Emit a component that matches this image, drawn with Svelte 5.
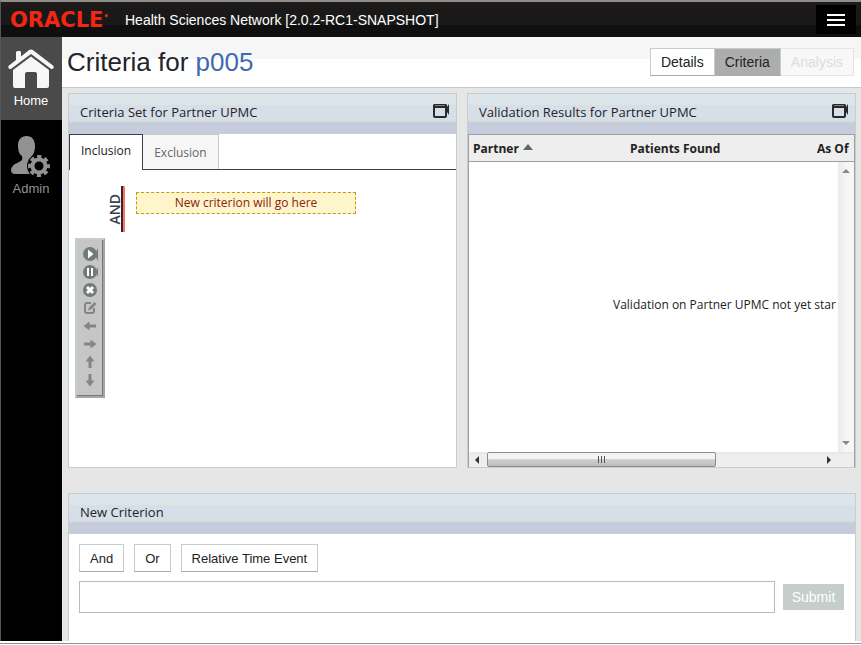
<script lang="ts">
    type Tool = { name: string; icon: string };

    let view = $state('Criteria');
    let tab = $state('Inclusion');
    let criterion = $state('');

    const views = ['Details', 'Criteria', 'Analysis'];
    const tabs = ['Inclusion', 'Exclusion'];
    const operators = ['And', 'Or', 'Relative Time Event'];
    const tools: Tool[] = [
        { name: 'Run', icon: 'play' },
        { name: 'Pause', icon: 'pause' },
        { name: 'Remove', icon: 'remove' },
        { name: 'Edit', icon: 'edit' },
        { name: 'Move left', icon: 'left' },
        { name: 'Move right', icon: 'right' },
        { name: 'Move up', icon: 'up' },
        { name: 'Move down', icon: 'down' },
    ];
    const turns: { [icon: string]: number } = { left: 180, right: 0, up: -90, down: 90 };
</script>

{#snippet windowIcon()}
    <button class="window-button" aria-label="Maximize panel">
        <svg width="17" height="14" viewBox="0 0 17 14">
            <path d="M1 3V12a1 1 0 0 0 1 1H12a1 1 0 0 0 1-1V3" fill="none" stroke="#262a2e" stroke-width="2" />
            <path d="M1 0H13L14 1V4H0V1Z" fill="#262a2e" />
            <path d="M2 1.500H12" stroke="#7a8188" />
            <path d="M14 3L16 0V11L14 8Z" fill="#262a2e" />
        </svg>
    </button>
{/snippet}

<div class="page">
    <header class="topbar">
        <span class="logo">ORACLE<sup>•</sup></span>
        <span class="product">Health Sciences Network [2.0.2-RC1-SNAPSHOT]</span>
        <button class="menu" aria-label="Menu">
            <svg width="18" height="12" viewBox="0 0 18 12">
                <path d="M0 1H18M0 6H18M0 11H18" stroke="#fff" stroke-width="2" />
            </svg>
        </button>
    </header>

    <div class="body">
        <nav class="sidebar">
            <a class="nav-item active" href="#home">
                <svg width="46" height="39" viewBox="0 0 46 39">
                    <path d="M8 11V3.500Q8 2 9.500 2H12Q13 2 13 3.500V7.500L20.500 1.500Q23 -.5 25.500 1.500L45 16.500Q46.500 18 45 19.500Q44 20.500 42.500 19.500L23 5L3.500 19.500Q2 20.500 1 19.500Q-.5 18 1 16.500Z" fill="#f7f7f7" />
                    <path d="M5 21L23 7.500L41 21V37Q41 39 39 39H29V25Q29 23 27 23H19Q17 23 17 25V39H7Q5 39 5 37Z" fill="#f7f7f7" />
                </svg>
                <span>Home</span>
            </a>
            <a class="nav-item" href="#admin">
                <svg width="40" height="41" viewBox="0 0 40 41">
                    <path d="M15.500 0C21 0 24 4 24 10C24 16 22 19 20 21C20 24 22 25 25 26C29 28 31 30 32 34L31 38H4Q0 38 0 34C1 29 4 28 8 26C11 25 12 23 11 20C8 18 7 14 7 9C7 4 10 0 15.500 0Z" fill="#929292" />
                    <circle cx="28" cy="30" r="12" fill="#000" />
                    <circle cx="28" cy="30" r="9" fill="none" stroke="#929292" stroke-width="4" stroke-dasharray="4 3.068" stroke-dashoffset="2" />
                    <circle cx="28" cy="30" r="6.500" fill="none" stroke="#929292" stroke-width="4" />
                </svg>
                <span>Admin</span>
            </a>
        </nav>

        <main>
            <div class="title-row">
                <h1>Criteria for <a href="#p005">p005</a></h1>
                <div class="views">
                    {#each views as name}
                        <button
                            class:current={view === name}
                            disabled={name === 'Analysis'}
                            onclick={() => (view = name)}
                        >
                            {name}
                        </button>
                    {/each}
                </div>
            </div>

            <div class="panels">
                <section class="panel">
                    <div class="panel-head">
                        <h2>Criteria Set for Partner UPMC</h2>
                        {@render windowIcon()}
                    </div>
                    <div class="tabs" role="tablist">
                        {#each tabs as name}
                            <button
                                role="tab"
                                aria-selected={tab === name}
                                class:selected={tab === name}
                                onclick={() => (tab = name)}
                            >
                                {name}
                            </button>
                        {/each}
                    </div>
                    <div class="criteria">
                        <div class="group">
                            <span class="join">AND</span>
                            <div class="drop">New criterion will go here</div>
                        </div>
                        <div class="toolbox" role="toolbar" aria-label="Criterion tools">
                            {#each tools as tool}
                                <button aria-label={tool.name}>
                                    <svg width="16" height="14" viewBox="0 0 16 14">
                                        {#if tool.icon === 'play'}
                                            <path d="M14 5L16 1V14L14 10Z" fill="#727b7a" />
                                            <circle cx="8" cy="7" r="7" fill="#727b7a" />
                                            <path d="M6 2.500L11.500 7L6 11.500Z" fill="#fff" />
                                        {:else if tool.icon === 'pause'}
                                            <path d="M14 6L16 2V12L14 8Z" fill="#727b7a" />
                                            <circle cx="8" cy="7" r="7" fill="#727b7a" />
                                            <path d="M6 3V11M10 3V11" stroke="#fff" stroke-width="2" />
                                        {:else if tool.icon === 'remove'}
                                            <circle cx="8" cy="7" r="7" fill="#727b7a" />
                                            <path d="M5 4L11 10M11 4L5 10" stroke="#fff" stroke-width="3" />
                                        {:else if tool.icon === 'edit'}
                                            <path d="M9 2H5Q3 2 3 4V10Q3 12 5 12H10Q12 12 12 10V7" fill="none" stroke="#858585" stroke-width="2" />
                                            <path d="M6 9.500L7 6.500L12.500 1L14.500 3L9 8.500Z" fill="#858585" />
                                        {:else}
                                            <path
                                                d="M2 5.500H8.500V2.500L14.500 7L8.500 11.500V8.500H2Z"
                                                fill="#858585"
                                                transform={`rotate(${turns[tool.icon]} 8 7)`}
                                            />
                                        {/if}
                                    </svg>
                                </button>
                            {/each}
                        </div>
                    </div>
                </section>

                <section class="panel">
                    <div class="panel-head">
                        <h2>Validation Results for Partner UPMC</h2>
                        {@render windowIcon()}
                    </div>
                    <div class="results">
                        <table>
                            <thead>
                                <tr>
                                    <th class="col-partner">Partner <span class="sort"></span></th>
                                    <th class="col-found">Patients Found</th>
                                    <th>As Of</th>
                                </tr>
                            </thead>
                        </table>
                        <div class="viewport">
                            <p class="message">Validation on Partner UPMC not yet star</p>
                            <div class="vbar">
                                <i class="arrow up"></i>
                                <i class="arrow down"></i>
                            </div>
                        </div>
                        <div class="hbar">
                            <i class="arrow left"></i>
                            <div class="track"><div class="thumb"><i></i><i></i><i></i></div></div>
                            <i class="arrow right"></i>
                        </div>
                    </div>
                </section>
            </div>

            <section class="panel builder">
                <div class="panel-head">
                    <h2>New Criterion</h2>
                </div>
                <div class="operators">
                    {#each operators as name}
                        <button>{name}</button>
                    {/each}
                </div>
                <form class="entry" onsubmit={(e) => e.preventDefault()}>
                    <input type="text" aria-label="New criterion" bind:value={criterion} />
                    <button disabled={!criterion}>Submit</button>
                </form>
            </section>
        </main>
    </div>
    <div class="frame-end"></div>
</div>

<style>
    :global(body) {
        margin: 0;
        background: #fff;
    }

    .page {
        display: flex;
        flex-direction: column;
        min-height: 100vh;
        font-family: 'Liberation Sans', Arial, sans-serif;
        font-size: 14px;
        color: #222;
    }

    .page * {
        box-sizing: border-box;
    }

    button,
    input {
        margin: 0;
        padding: 0;
        font: inherit;
        color: inherit;
        border: 0;
        border-radius: 0;
        background: none;
    }

    svg {
        display: block;
    }

    .topbar {
        display: flex;
        align-items: center;
        height: 37px;
        padding: 0 5px 0 9px;
        border-top: 2px solid #8e8e8e;
        border-left: 1px solid #555;
        background: linear-gradient(#241c18 0, #191919 6px, #191919 23px, #0f0f0f 23px);
    }

    .logo {
        width: 115px;
        font: bold 21px 'DejaVu Sans', sans-serif;
        line-height: 24px;
        color: #f22613;
        white-space: nowrap;
    }

    .logo sup {
        font-size: 8px;
        line-height: 8px;
    }

    .product {
        flex: 1;
        color: #fff;
    }

    .menu {
        display: grid;
        place-items: center;
        width: 40px;
        height: 29px;
        background: #000;
    }

    .body {
        display: flex;
        flex: 1;
    }

    .sidebar {
        width: 62px;
        flex: none;
        border-left: 1px solid #555;
        background: #000;
    }

    .nav-item {
        display: flex;
        flex-direction: column;
        align-items: center;
        height: 83px;
        padding: 12px 1px 0 0;
        gap: 5px;
        font-size: 13px;
        line-height: 16px;
        color: #929292;
        text-decoration: none;
    }

    .nav-item + .nav-item {
        padding-top: 16px;
        gap: 4px;
    }

    .nav-item.active {
        color: #fff;
        background: #4a4a4a;
    }

    main {
        display: flex;
        flex: 1;
        flex-direction: column;
        min-width: 0;
        background: #e6e6e6;
    }

    .title-row {
        display: flex;
        align-items: center;
        justify-content: space-between;
        height: 51px;
        padding: 0 7px 0 5px;
        border-bottom: 1px solid #c8c8c8;
        background: linear-gradient(#f6f6f6 22px, #fff 22px);
    }

    h1 {
        margin: 0;
        font-size: 26px;
        font-weight: normal;
        color: #23232b;
    }

    h1 a {
        color: #3f69ae;
        text-decoration: none;
    }

    .views {
        display: flex;
    }

    .views button {
        height: 28px;
        padding: 0 10px;
        border: 1px solid #c5cecc;
        border-bottom-color: #a9a9ae;
        background: #fff;
    }

    .views button + button {
        border-left: 0;
    }

    .views .current {
        background: #adadad;
    }

    .views button:disabled {
        color: #ddd;
        border-color: #e4e4e4;
        background: #f8f8f8;
    }

    .panels {
        display: grid;
        grid-template-columns: 1fr 1fr;
        gap: 10px;
        padding: 5px 5px 0 6px;
    }

    .panel {
        display: flex;
        flex-direction: column;
        min-width: 0;
        min-height: 375px;
        border: 1px solid #c5cecc;
        background: #fff;
    }

    .panel-head {
        display: flex;
        align-items: flex-start;
        justify-content: space-between;
        height: 40px;
        flex: none;
        padding: 10px 6px 0 11px;
        background: linear-gradient(
            #dde5ef 0,
            #dbe6e4 11px,
            #d8dee8 11px,
            #d6dfe7 24px,
            #d4dedb 28px,
            #c6ccdc 28px
        );
    }

    h2 {
        margin: 0;
        font: 13px 'Open Sans', sans-serif;
        line-height: 17px;
        color: #23232b;
    }

    .tabs {
        display: flex;
        height: 36px;
        border-bottom: 1px solid #36434f;
        font: 12px 'Open Sans', sans-serif;
    }

    .tabs button {
        height: 35px;
        padding: 0 11px;
        border: 1px solid #c8c8c8;
        border-width: 1px 1px 0 0;
        color: #666;
        background: #f6f6f6;
    }

    .tabs .selected {
        height: 36px;
        padding-bottom: 4px;
        border: 1px solid #36434f;
        border-bottom: 0;
        color: #222;
        background: #fff;
    }

    .criteria {
        padding: 16px 6px;
    }

    .group {
        display: flex;
        margin-left: 32px;
        font: 12px 'Open Sans', sans-serif;
    }

    .join {
        height: 46px;
        width: 18px;
        border-right: 2px solid #fb7469;
        box-shadow: inset -2px 0 #382522;
        font-size: 14px;
        font-weight: 600;
        line-height: 16px;
        text-align: center;
        color: #36434f;
        writing-mode: sideways-lr;
    }

    .drop {
        width: 220px;
        height: 22px;
        margin: 6px 0 0 11px;
        border: 1px dashed #c49a13;
        line-height: 20px;
        text-align: center;
        color: #882211;
        background: #fff5cc;
    }

    .toolbox {
        display: flex;
        flex-direction: column;
        gap: 4px;
        width: 30px;
        height: 160px;
        margin-top: 6px;
        padding: 7px 5px;
        border: 2px solid #a4a4aa;
        border-top-color: #c3cecb;
        border-left-color: #c3cecb;
        box-shadow: inset -1px -1px #777;
        background: #c6c6c6;
    }

    .results {
        display: flex;
        flex: 1;
        flex-direction: column;
        border: 1px solid #a0a0a0;
        border-bottom: 0;
    }

    table {
        width: 100%;
        border-collapse: collapse;
        table-layout: fixed;
        background: #eee;
    }

    th {
        height: 26px;
        padding: 2px 4px 0;
        border-bottom: 1px solid #a0a0a0;
        font: bold 12px 'Open Sans', sans-serif;
        text-align: left;
        white-space: nowrap;
        color: #222;
    }

    .col-partner {
        width: 157px;
    }

    .col-found {
        width: 187px;
    }

    .sort {
        display: inline-block;
        margin: 0 0 3px 1px;
        border: 5px solid transparent;
        border-top: 0;
        border-bottom: 6px solid #666;
    }

    .viewport {
        display: flex;
        flex: 1;
        min-height: 0;
        padding-left: 144px;
    }

    .message {
        flex: 1;
        align-self: center;
        margin: 0 0 4px;
        font: 12px 'Open Sans', sans-serif;
        white-space: nowrap;
    }

    .vbar {
        display: flex;
        flex-direction: column;
        align-items: center;
        justify-content: space-between;
        width: 16px;
        padding: 7px 0;
        background: linear-gradient(90deg, #eaeaea, #f6f6f6 8px);
    }

    .arrow {
        border: 4px solid transparent;
    }

    .arrow.up {
        border-top: 0;
        border-bottom-color: #888;
    }

    .arrow.down {
        border-bottom: 0;
        border-top-color: #888;
    }

    .arrow.left {
        border-left: 0;
        border-right-color: #333;
    }

    .arrow.right {
        border-right: 0;
        border-left-color: #333;
    }

    .hbar {
        display: flex;
        align-items: center;
        height: 15px;
        padding: 0 23px 0 6px;
        background: linear-gradient(#e6e6e6, #eee 3px);
    }

    .track {
        flex: 1;
        margin: 0 8px;
    }

    .thumb {
        display: flex;
        align-items: center;
        justify-content: center;
        gap: 2px;
        width: 69%;
        height: 15px;
        border: 1px solid #8d8d8d;
        border-radius: 2px;
        background: linear-gradient(#f4f4f4 6px, #d3d3d3 6px, #bcbcbc);
    }

    .thumb i {
        width: 1px;
        height: 7px;
        background: #555;
    }

    .builder {
        flex: 1;
        min-height: 148px;
        margin: 25px 5px 0 6px;
        border-bottom: 0;
    }

    .operators {
        display: flex;
        gap: 10px;
        padding: 10px 10px 9px;
        font-size: 13px;
    }

    .operators button {
        height: 28px;
        padding: 0 10px;
        border: 1px solid #c5cecc;
        border-bottom-color: #a9a9ae;
    }

    .entry {
        display: flex;
        align-items: center;
        gap: 8px;
        padding: 0 11px 0 10px;
    }

    .entry input {
        flex: 1;
        min-width: 0;
        height: 32px;
        padding: 0 8px;
        border: 1px solid #b9b9b9;
    }

    .entry button {
        width: 61px;
        height: 26px;
        color: #fff;
        background: #c6cecc;
    }

    .frame-end {
        height: 4px;
        background: linear-gradient(#fff 2px, #8f8f8f 2px, #8f8f8f 3px, #fff 3px);
    }
</style>
